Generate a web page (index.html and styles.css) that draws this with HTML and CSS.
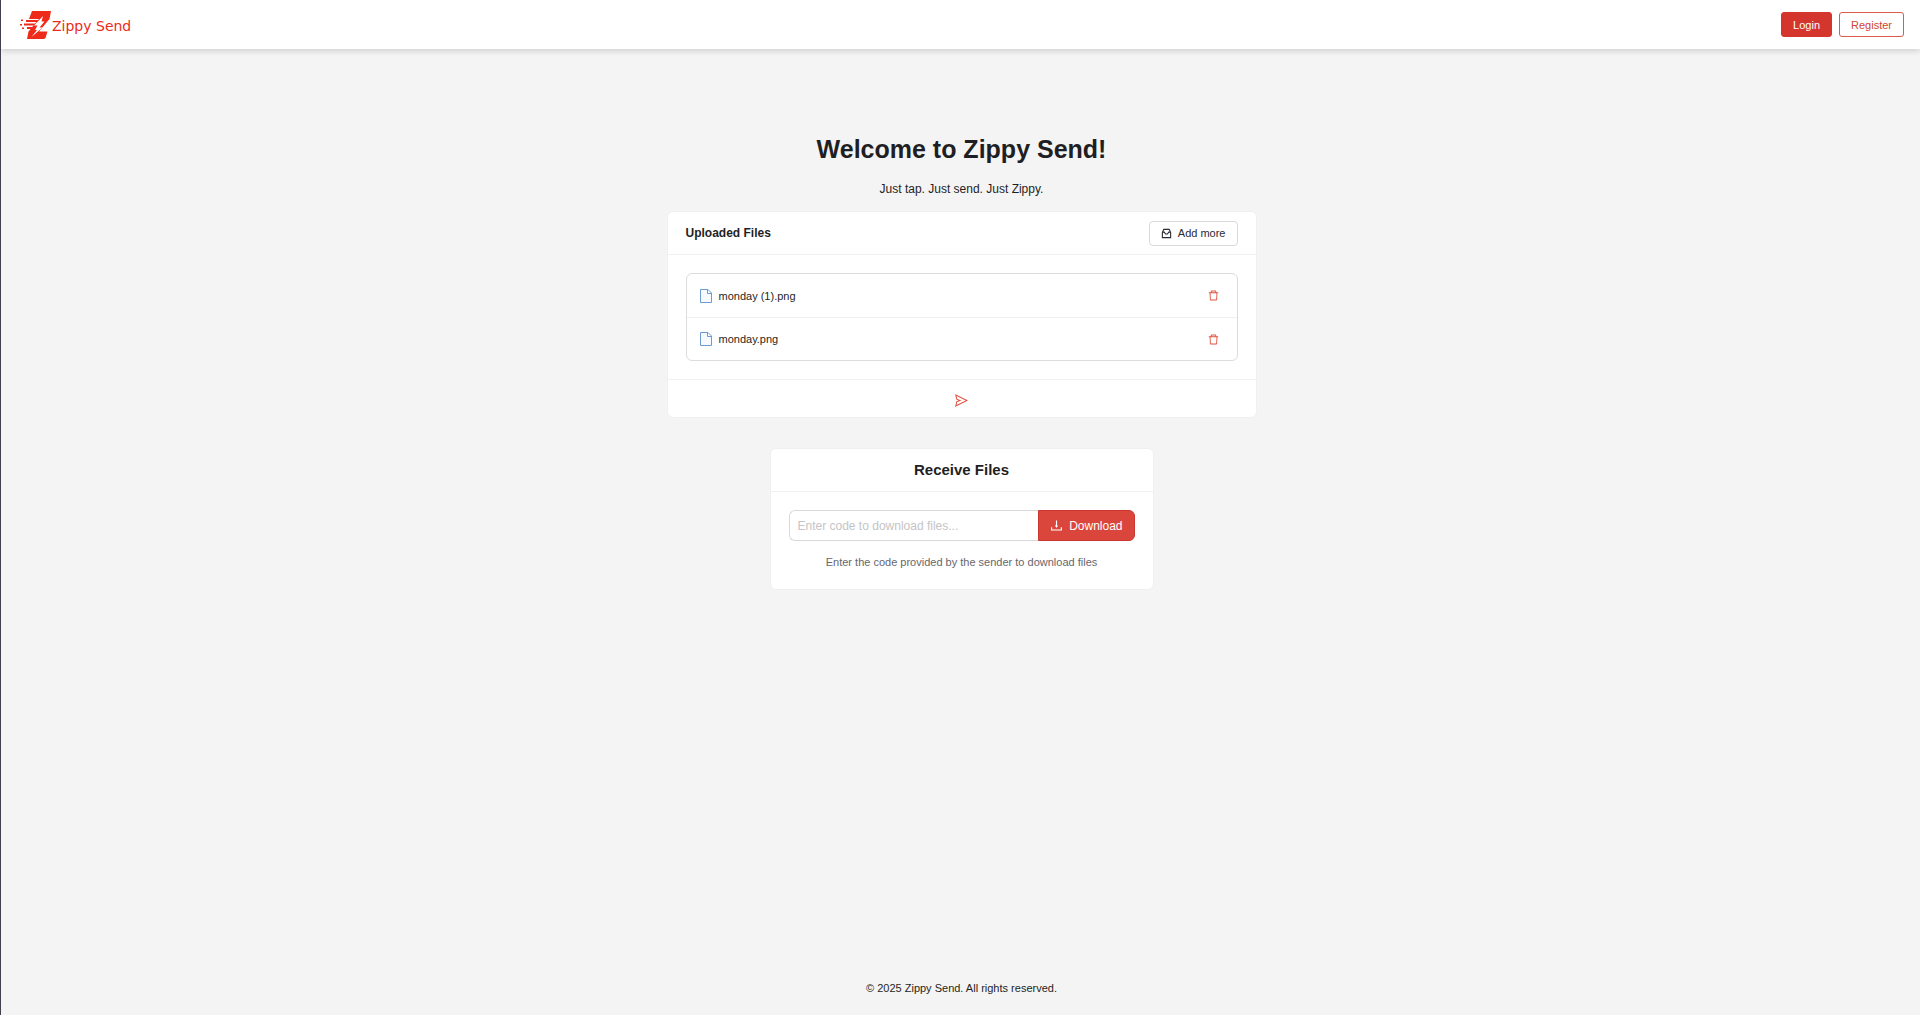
FILE: index.html
```html
<!DOCTYPE html>
<html lang="en">

<head>
    <meta charset="UTF-8">
    <meta name="viewport" content="width=device-width, initial-scale=1.0">
    <title>Zippy Send</title>
    <link rel="stylesheet" href="styles.css">
</head>

<body>
    <header class="navbar">
        <a class="brand" href="#">
            <svg class="brand-logo" viewBox="0 0 32 30" aria-hidden="true">
                <path fill="#ee2a1b" d="M12 1H31L29.500 9L19 21.500H27.500L25.500 28L24 29H7L8.500 21.500L19 9H9Z" />
                <path fill="#ee2a1b" d="M6 10H20V12H6ZM1 9.500H3V11H1ZM4 13.500H18V15.500H4ZM0 14H2V15.500H0ZM7 17H15V19H7ZM2 17.500H4V19H2Z" />
                <path fill="#fff" d="M23 6L14 15.500H17.500L15 20H17L11.500 27L22.500 17.500H19.500L24.500 11.500H21.500Z" />
            </svg>
            <span class="brand-name">Zippy Send</span>
        </a>
        <nav class="nav-actions">
            <button class="btn btn-primary" type="button">Login</button>
            <button class="btn btn-outline" type="button">Register</button>
        </nav>
    </header>

    <main class="content">
        <h1 class="title">Welcome to Zippy Send!</h1>
        <p class="tagline">Just tap. Just send. Just Zippy.</p>

        <section class="card upload-card">
            <div class="card-head">
                <h2 class="card-title">Uploaded Files</h2>
                <button class="btn btn-default" type="button">
                    <svg class="icon-sm" viewBox="0 0 12 12" fill="none" stroke="currentColor" stroke-width="1.200" aria-hidden="true">
                        <path d="M1.500 5L3 1.500H9L10.500 5V10.500H1.500ZM1.500 4.500H3.500L5 6.500H7L8.500 4.500H10.500" />
                    </svg>
                    Add more
                </button>
            </div>
            <div class="card-body">
                <ul class="file-list">
                    <li class="file-item">
                        <svg class="icon-file" viewBox="0 0 12 14" aria-hidden="true">
                            <path fill="#f7fbff" stroke="#6a9bd2" d="M.5 .5H8L11.500 4V13.500H.5ZM7.500 .5V4.500H11.500" />
                        </svg>
                        <span class="file-name">monday (1).png</span>
                        <button class="btn-icon" type="button" aria-label="Delete monday (1).png">
                            <svg class="icon-sm" viewBox="64 64 896 896" fill="currentColor" aria-hidden="true">
                                <path d="M360 184h-8c4.400 0 8-3.600 8-8v8h304v-8c0 4.400 3.600 8 8 8h-8v72h72v-80c0-35.300-28.700-64-64-64H352c-35.300 0-64 28.700-64 64v80h72v-72zm504 72H160c-17.700 0-32 14.300-32 32v32c0 4.400 3.600 8 8 8h60.400l24.700 523c1.600 34.100 29.800 61 63.900 61h454c34.200 0 62.300-26.800 63.900-61l24.700-523H888c4.400 0 8-3.600 8-8v-32c0-17.700-14.300-32-32-32zM731.300 840H292.700l-24.200-512h487l-24.200 512z" />
                            </svg>
                        </button>
                    </li>
                    <li class="file-item">
                        <svg class="icon-file" viewBox="0 0 12 14" aria-hidden="true">
                            <path fill="#f7fbff" stroke="#6a9bd2" d="M.5 .5H8L11.500 4V13.500H.5ZM7.500 .5V4.500H11.500" />
                        </svg>
                        <span class="file-name">monday.png</span>
                        <button class="btn-icon" type="button" aria-label="Delete monday.png">
                            <svg class="icon-sm" viewBox="64 64 896 896" fill="currentColor" aria-hidden="true">
                                <path d="M360 184h-8c4.400 0 8-3.600 8-8v8h304v-8c0 4.400 3.600 8 8 8h-8v72h72v-80c0-35.300-28.700-64-64-64H352c-35.300 0-64 28.700-64 64v80h72v-72zm504 72H160c-17.700 0-32 14.300-32 32v32c0 4.400 3.600 8 8 8h60.400l24.700 523c1.600 34.100 29.800 61 63.900 61h454c34.200 0 62.300-26.800 63.900-61l24.700-523H888c4.400 0 8-3.600 8-8v-32c0-17.700-14.300-32-32-32zM731.300 840H292.700l-24.200-512h487l-24.200 512z" />
                            </svg>
                        </button>
                    </li>
                </ul>
            </div>
            <div class="card-foot">
                <button class="btn-icon" type="button" aria-label="Send files">
                    <svg class="icon-md" viewBox="64 64 896 896" fill="currentColor" aria-hidden="true">
                        <path d="M931.400 498.900L94.900 79.500c-3.400-1.700-7.300-2.100-11-1.200a15.990 15.990 0 00-11.700 19.300l86.200 352.200c1.300 5.300 5.200 9.600 10.400 11.300l147.700 50.700-147.600 50.700c-5.200 1.800-9.100 6-10.300 11.300L72.200 926.500c-.9 3.700-.5 7.600 1.200 10.900 3.900 7.900 13.500 11.100 21.500 7.200l836.500-417c3.100-1.500 5.600-4.100 7.200-7.100 3.900-8 .7-17.600-7.200-21.600zM170.800 826.300l50.300-205.600 295.200-101.300c2.300-.8 4.200-2.600 5-5 1.400-4.200-.8-8.700-5-10.200L221.100 403 171 198.200l628 314.900-628.200 313.200z" />
                    </svg>
                </button>
            </div>
        </section>

        <section class="card receive-card">
            <div class="card-head card-head-center">
                <h2 class="card-title card-title-lg">Receive Files</h2>
            </div>
            <div class="card-body">
                <form class="code-form">
                    <input class="code-input" type="text" aria-label="Download code" placeholder="Enter code to download files...">
                    <button class="btn-download" type="button">
                        <svg class="icon-md" viewBox="64 64 896 896" fill="currentColor" aria-hidden="true">
                            <path d="M505.700 661a8 8 0 0012.600 0l112-141.700c4.100-5.200.4-12.900-6.300-12.900h-74.100V168c0-4.400-3.600-8-8-8h-60c-4.400 0-8 3.600-8 8v338.300H400c-6.700 0-10.400 7.700-6.300 12.900l112 141.800zM878 626h-60c-4.400 0-8 3.600-8 8v154H214V634c0-4.400-3.600-8-8-8h-60c-4.400 0-8 3.600-8 8v198c0 17.700 14.300 32 32 32h684c17.700 0 32-14.300 32-32V634c0-4.400-3.600-8-8-8z" />
                        </svg>
                        Download
                    </button>
                </form>
                <p class="hint">Enter the code provided by the sender to download files</p>
            </div>
        </section>
    </main>

    <footer class="footer">© 2025 Zippy Send. All rights reserved.</footer>
</body>

</html>
```

FILE: styles.css
```css
* {
    box-sizing: border-box;
}

body {
    margin: 0;
    min-height: 100vh;
    display: flex;
    flex-direction: column;
    border-left: 1px solid #41404f;
    background-color: #f4f4f4;
    color: #1f1f23;
    font-family: "Liberation Sans", Arial, sans-serif;
    font-size: 11px;
    line-height: 18px;
}

h1, h2, p, ul {
    margin: 0;
    padding: 0;
}

button, input {
    font-family: inherit;
    font-size: inherit;
    line-height: inherit;
}

svg {
    display: block;
    flex-shrink: 0;
}

/* navbar */
.navbar {
    height: 49px;
    display: flex;
    align-items: center;
    justify-content: space-between;
    padding: 0 16px 0 19px;
    background-color: #fff;
    box-shadow: 0 2px 6px rgba(0, 0, 0, 0.15);
}

.brand {
    display: flex;
    align-items: center;
    color: #ee2a1b;
    text-decoration: none;
}

.brand-logo {
    width: 32px;
    height: 30px;
}

.brand-name {
    padding-top: 2px;
    font-family: "DejaVu Sans", sans-serif;
    font-size: 14px;
}

.nav-actions {
    display: flex;
    gap: 7px;
}

/* buttons */
.btn {
    display: flex;
    align-items: center;
    gap: 6px;
    height: 25px;
    padding: 0 11px;
    border: 1px solid;
    border-radius: 3px;
}

.btn-primary {
    background-color: #d4352d;
    border-color: #d4352d;
    color: #fff;
}

.btn-outline {
    background-color: #fff;
    border-color: #db5a4c;
    color: #d2442f;
}

.btn-default {
    background-color: #fff;
    border-color: #d9d9d9;
    border-radius: 4px;
    color: #2b2b33;
}

.btn-icon {
    padding: 0;
    border: 0;
    background: none;
    color: #e0513f;
}

.icon-sm {
    width: 11px;
    height: 11px;
}

.icon-md {
    width: 13px;
    height: 13px;
}

.icon-file {
    width: 12px;
    height: 14px;
}

/* main column */
.content {
    flex: 1;
    display: flex;
    flex-direction: column;
    align-items: center;
    padding: 82px 16px 0 18px;
}

.title {
    font-size: 25px;
    line-height: 36px;
}

.tagline {
    margin: 12px 0;
    font-size: 12px;
    line-height: 20px;
}

/* cards */
.card {
    width: 100%;
    background-color: #fff;
    border: 1px solid #f0f0f0;
    border-radius: 6px;
}

.upload-card {
    max-width: 590px;
    margin-bottom: 30px;
}

.receive-card {
    max-width: 384px;
}

.card-head {
    display: flex;
    align-items: center;
    justify-content: space-between;
    height: 43px;
    padding: 0 18px;
    border-bottom: 1px solid #f0f0f0;
}

.card-head-center {
    justify-content: center;
}

.card-title {
    font-size: 12px;
}

.card-title-lg {
    font-size: 15px;
}

.card-body {
    padding: 18px;
}

.card-foot {
    display: flex;
    align-items: center;
    justify-content: center;
    height: 38px;
    padding-top: 3px;
    border-top: 1px solid #f0f0f0;
}

/* file list */
.file-list {
    list-style: none;
    border: 1px solid #dcdcdc;
    border-radius: 6px;
}

.file-item {
    display: flex;
    align-items: center;
    gap: 7px;
    height: 43px;
    padding: 0 18px 0 13px;
}

.file-item + .file-item {
    border-top: 1px solid #f0f0f0;
}

.file-name {
    flex: 1;
}

/* receive form */
.code-form {
    display: flex;
}

.code-input {
    flex: 1;
    min-width: 0;
    height: 31px;
    padding: 0 8px;
    border: 1px solid #d9d9d9;
    border-right: 0;
    border-radius: 6px 0 0 6px;
    font-size: 12px;
}

.code-input::placeholder {
    color: #c4c4c6;
}

.btn-download {
    display: flex;
    align-items: center;
    gap: 6px;
    height: 31px;
    padding: 0 11px;
    border: 1px solid #cb3730;
    border-radius: 0 6px 6px 0;
    background-color: #db463c;
    color: #fff;
    font-size: 12px;
}

.hint {
    margin-top: 12px;
    text-align: center;
    color: #66666c;
}

/* footer */
.footer {
    padding: 18px 16px 18px 18px;
    text-align: center;
}
```
